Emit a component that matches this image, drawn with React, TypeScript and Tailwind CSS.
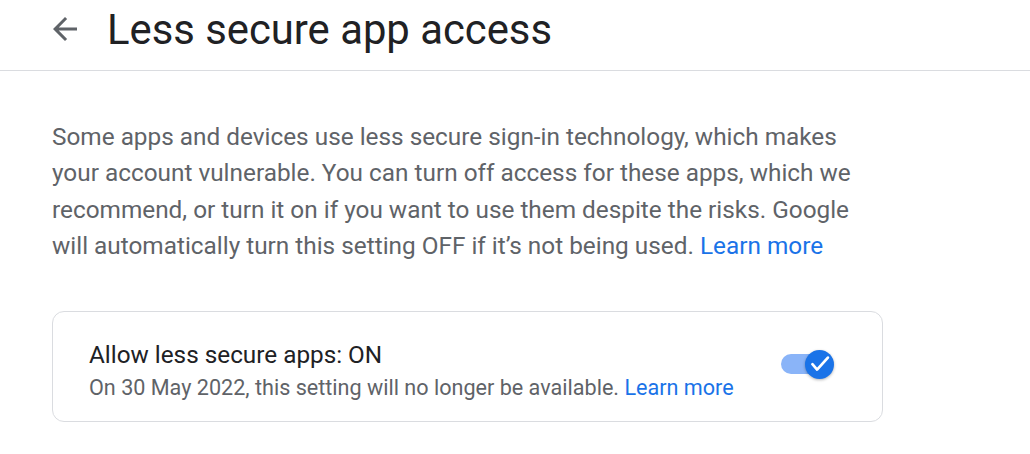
import React from 'react';

// Page "Less secure app access"
function BackArrow() {
  return (
    <svg width="36" height="36" viewBox="0 0 24 24" className="text-[#5f6368]">
      <path fill="currentColor" d="M20 11H7.83l5.59-5.59L12 4l-8 8 8 8 1.41-1.41L7.83 13H20v-2z" />
    </svg>
  );
}

function Toggle() {
  return (
    <div className="relative w-[53px] h-[29px]">
      <div className="absolute left-0 top-[4px] w-[46px] h-[20px] rounded-full bg-[#8ab4f8]" />
      <div className="absolute right-0 top-0 w-[29px] h-[29px] rounded-full bg-[#1a73e8] shadow-[0_1px_3px_rgba(0,0,0,0.3)]">
        <svg width="29" height="29" viewBox="0 0 29 29">
          <path fill="none" stroke="white" strokeWidth="2.7" strokeLinecap="round" strokeLinejoin="round" d="M7.4 14.2l4.7 5.4L22.9 7.6" />
        </svg>
      </div>
    </div>
  );
}

export default function App() {
  return (
    <div className="w-[1030px] h-[454px] bg-white overflow-hidden font-['Roboto',sans-serif]">
      {/* En-tête */}
      <div className="h-[71px] border-b border-[#dadce0] flex items-start">
        <div className="ml-[47px] mt-[11px]">
          <BackArrow />
        </div>
        <h1 className="ml-[24px] mt-[9px] text-[41.8px] leading-[41px] text-[#202124]">Less secure app access</h1>
      </div>

      <div className="pl-[52px] pt-[48px]">
        <p className="w-[818px] text-[24.35px] leading-[36.4px] text-[#5f6368]">
          Some apps and devices use less secure sign-in technology, which makes your account vulnerable. You can turn off access for these apps, which we recommend, or turn it on if you want to use them despite the risks. Google will automatically turn this setting OFF if it’s not being used.{' '}
          <span className="text-[#1a73e8]">Learn more</span>
        </p>

        <div className="mt-[46px] w-[831px] h-[111px] border border-[#dadce0] rounded-[12px] flex items-start justify-between pt-[27px] pl-[36px] pr-[48px]">
          <div>
            <div className="text-[24.3px] leading-[32px] text-[#202124]">Allow less secure apps: ON</div>
            <div className="text-[21.6px] leading-[28px] text-[#5f6368] mt-[3px]">
              On 30 May 2022, this setting will no longer be available.{' '}
              <span className="text-[#1a73e8]">Learn more</span>
            </div>
          </div>
          <div className="mt-[11px]">
            <Toggle />
          </div>
        </div>
      </div>
    </div>
  );
}
